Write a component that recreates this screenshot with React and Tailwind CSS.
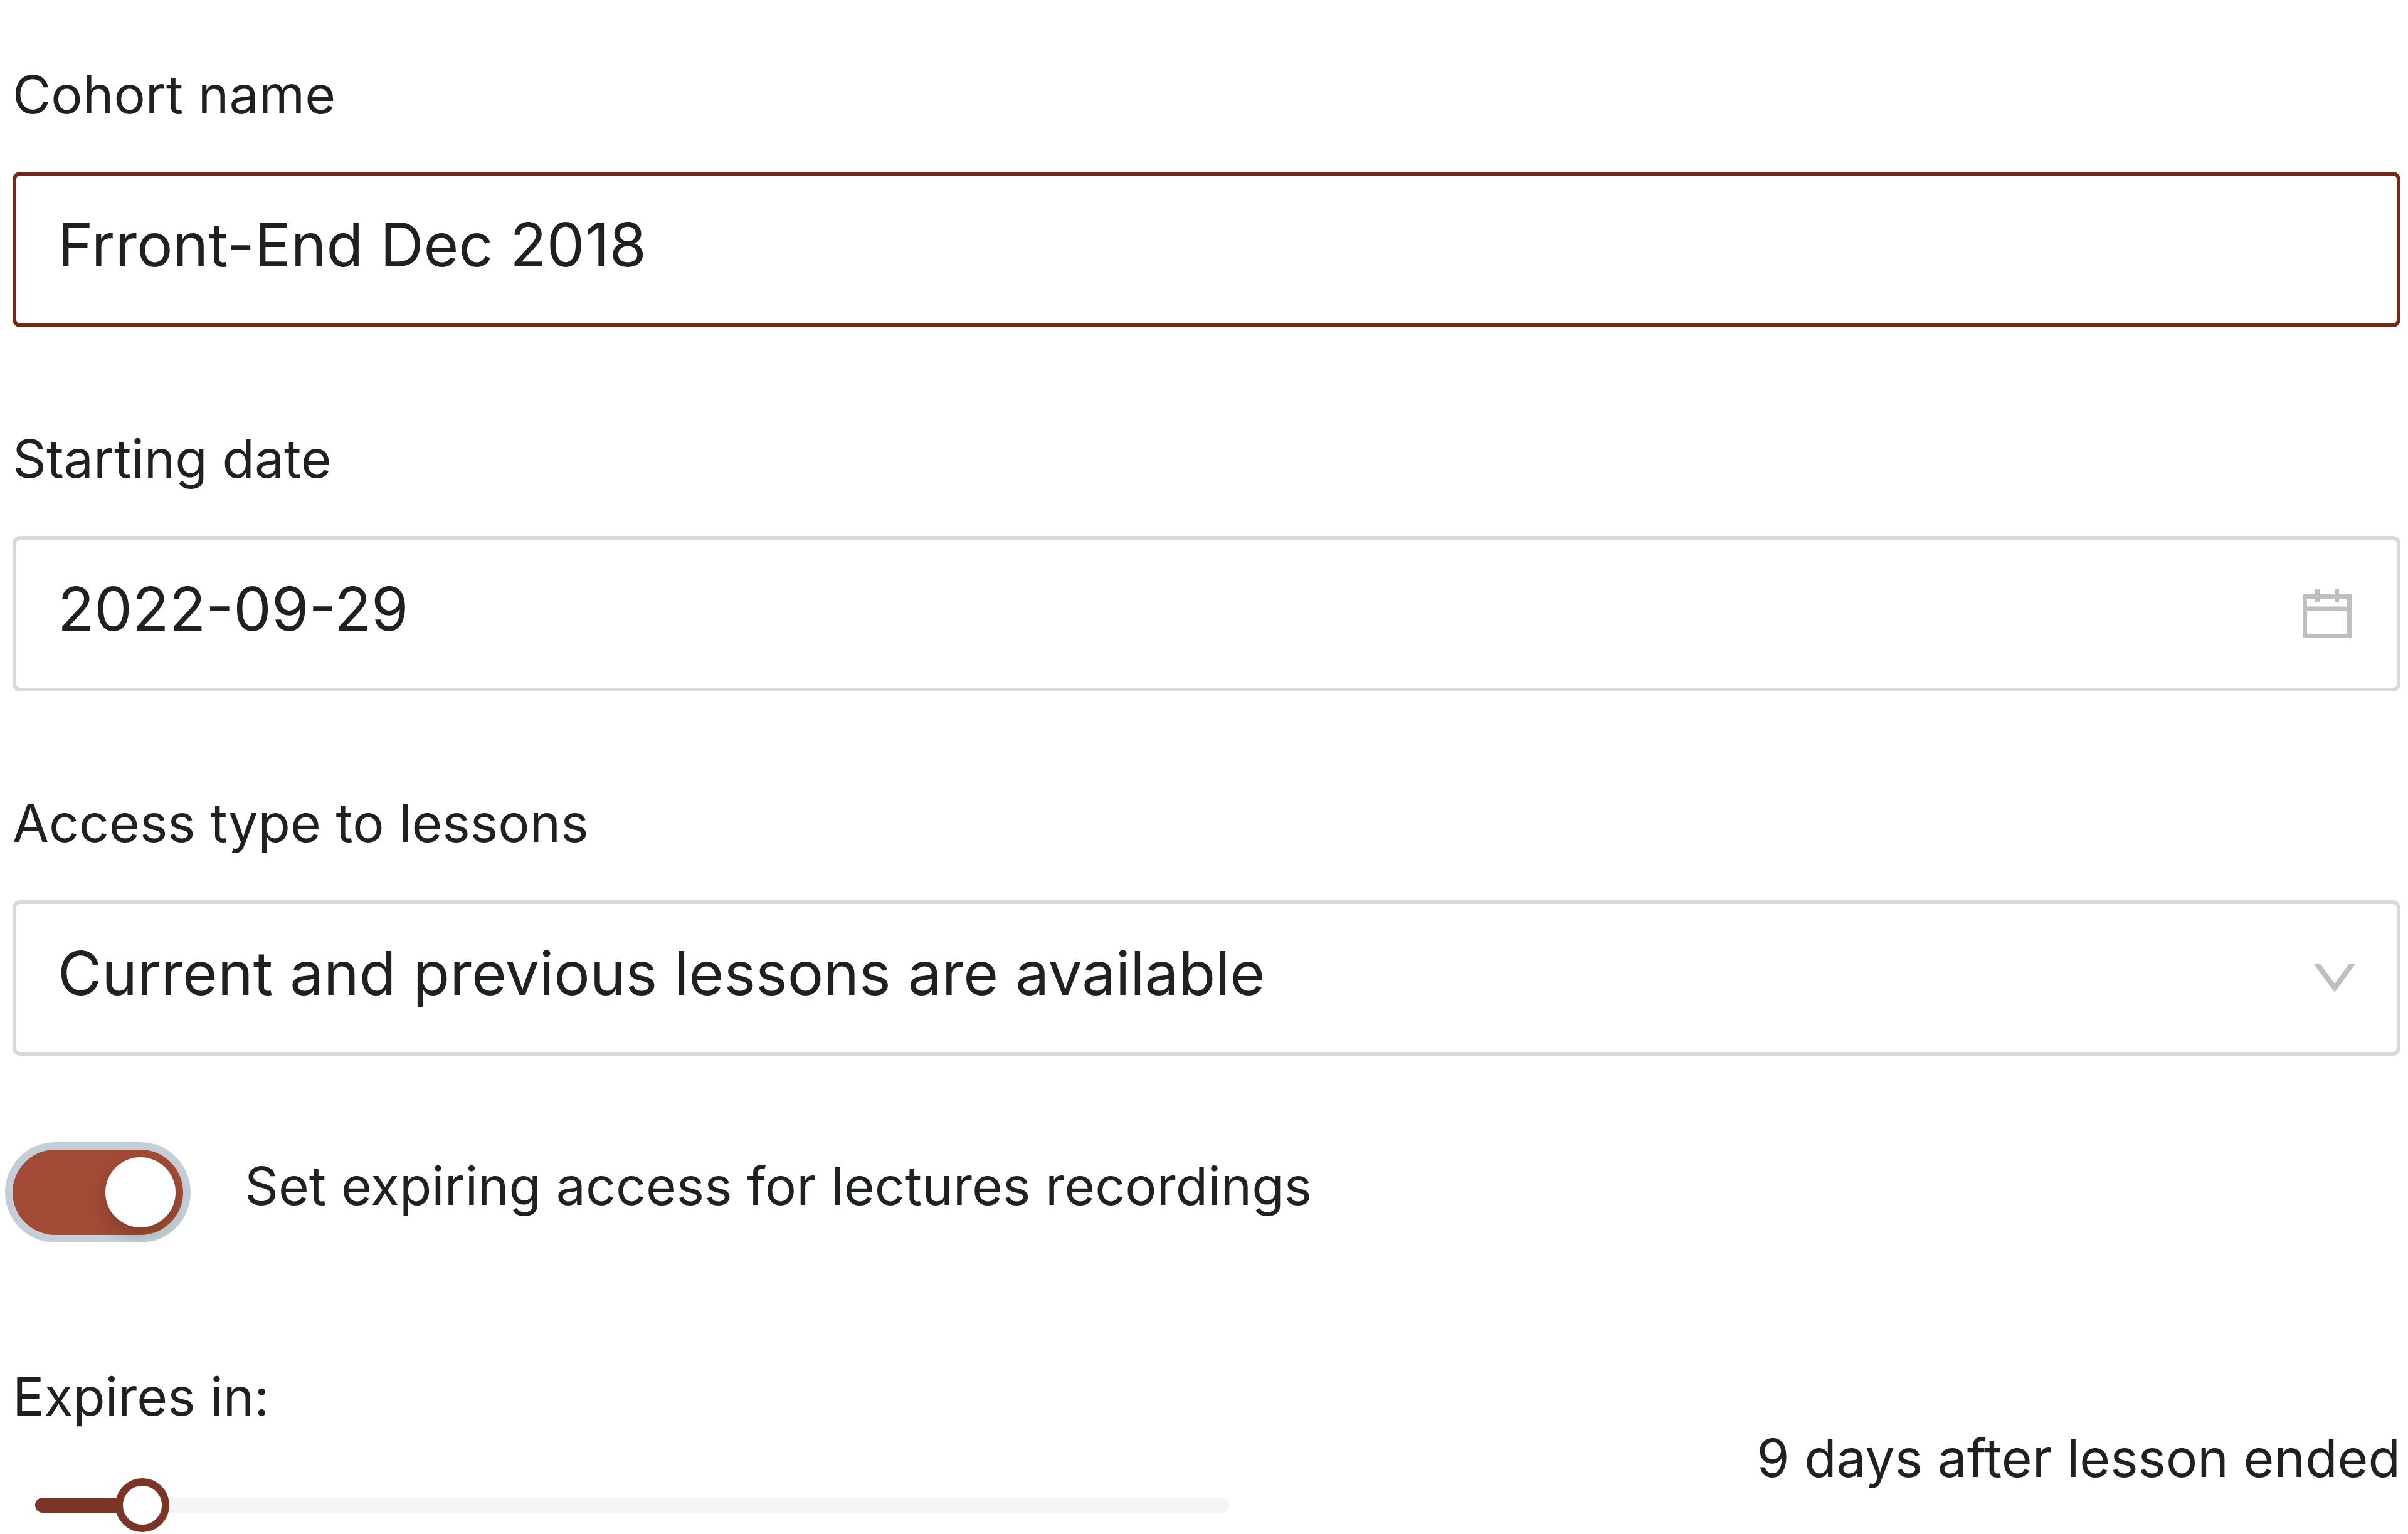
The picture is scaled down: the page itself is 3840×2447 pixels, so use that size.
import React, { useState } from 'react';

const accessTypes = [
    { value: 'previous', label: 'Current and previous lessons are available' },
];

const labelClass = 'block text-[84px] leading-[132px]';
const controlClass = 'block w-full h-[248px] pl-[66px] pb-4 border-6 rounded-xl bg-white text-[96px] outline-none';

const CalendarIcon = () => (
    <svg viewBox="0 0 78 78" className="w-[78px] h-[78px]" fill="none" stroke="#bfbfbf" strokeWidth="7" aria-hidden="true">
        <path d="M3.5 11.5H74.5V74.5H3.5ZM3.5 31H74.5M23.5 0V20.5M54.5 0V20.5" />
    </svg>
);

const ArrowIcon = () => (
    <svg viewBox="0 0 66 44" className="w-[66px] h-[44px]" fill="#bfbfbf" aria-hidden="true">
        <path d="M0 0H9Q10.500 0 11.500 1.500L33 31L54.500 1.500Q55.500 0 57 0H66L34.500 43Q33 44.500 31.500 43Z" />
    </svg>
);

const App = () => {
    const [name, setName] = useState('Frront-End Dec 2018');
    const [date, setDate] = useState('2022-09-29');
    const [access, setAccess] = useState('previous');
    const [expiring, setExpiring] = useState(true);
    const [days, setDays] = useState(9);

    return (
        <form className="pt-[85px] pl-5 pr-3 font-['Inter',sans-serif] text-[#1e2124]">
            <div className="flex flex-col gap-36">
                <div className="flex flex-col gap-[57px]">
                    <label htmlFor="name" className={labelClass}>Cohort name</label>
                    <input
                        id="name"
                        type="text"
                        value={name}
                        onChange={e => setName(e.target.value)}
                        className={`${controlClass} border-[#752815]`}
                    />
                </div>

                <div className="flex flex-col gap-[57px]">
                    <label htmlFor="date" className={labelClass}>Starting date</label>
                    <div className="relative">
                        <input
                            id="date"
                            type="text"
                            value={date}
                            onChange={e => setDate(e.target.value)}
                            className={`${controlClass} border-[#d9d9d9]`}
                        />
                        <span className="absolute inset-y-0 right-[78px] flex items-center pointer-events-none">
                            <CalendarIcon />
                        </span>
                    </div>
                </div>

                <div className="flex flex-col gap-[57px]">
                    <label htmlFor="access" className={labelClass}>Access type to lessons</label>
                    <div className="relative">
                        <select
                            id="access"
                            value={access}
                            onChange={e => setAccess(e.target.value)}
                            className={`${controlClass} appearance-none border-[#d9d9d9]`}
                        >
                            {accessTypes.map(type => (
                                <option key={type.value} value={type.value}>{type.label}</option>
                            ))}
                        </select>
                        <span className="absolute inset-y-0 right-[72px] flex items-center pointer-events-none">
                            <ArrowIcon />
                        </span>
                    </div>
                </div>
            </div>

            <div className="mt-[142px] flex items-center gap-[98px]">
                <button
                    id="expiring"
                    type="button"
                    role="switch"
                    aria-checked={expiring}
                    onClick={() => setExpiring(!expiring)}
                    className={`flex w-[272px] h-[136px] p-3 rounded-full ring-12 ring-[#c3ced7] ${expiring ? 'justify-end bg-[#a24a35]' : 'bg-[#bfbfbf]'}`}
                >
                    <span className="size-28 rounded-full bg-white shadow-[0_12px_24px_0_rgba(0,35,11,0.2)]" />
                </button>
                <label htmlFor="expiring" className={`${labelClass} pb-5`}>Set expiring access for lectures recordings</label>
            </div>

            <div className="mt-46 flex items-end justify-between">
                <div className="w-[52%]">
                    <label htmlFor="days" className={labelClass}>Expires in:</label>
                    <div className="relative mt-16 pl-9 pr-10 h-[86px] flex items-center">
                        <div className="w-full h-6 rounded-full bg-[#f4f4f4]">
                            <div className="h-6 rounded-full bg-[#7b3527]" style={{ width: `${days}%` }} />
                        </div>
                        {/* the thumb centre runs the full length of the rail */}
                        <input
                            id="days"
                            type="range"
                            min="0"
                            max="100"
                            value={days}
                            onChange={e => setDays(Number(e.target.value))}
                            className="absolute inset-y-0 -left-[7px] w-[calc(100%+10px)] appearance-none bg-transparent outline-none [&::-webkit-slider-thumb]:appearance-none [&::-webkit-slider-thumb]:size-[86px] [&::-webkit-slider-thumb]:rounded-full [&::-webkit-slider-thumb]:border-12 [&::-webkit-slider-thumb]:border-solid [&::-webkit-slider-thumb]:border-[#7b3527] [&::-webkit-slider-thumb]:bg-white"
                        />
                    </div>
                </div>
                <output htmlFor="days" className={`${labelClass} pb-[52px]`}>{days} days after lesson ended</output>
            </div>
        </form>
    );
};

export default App;
